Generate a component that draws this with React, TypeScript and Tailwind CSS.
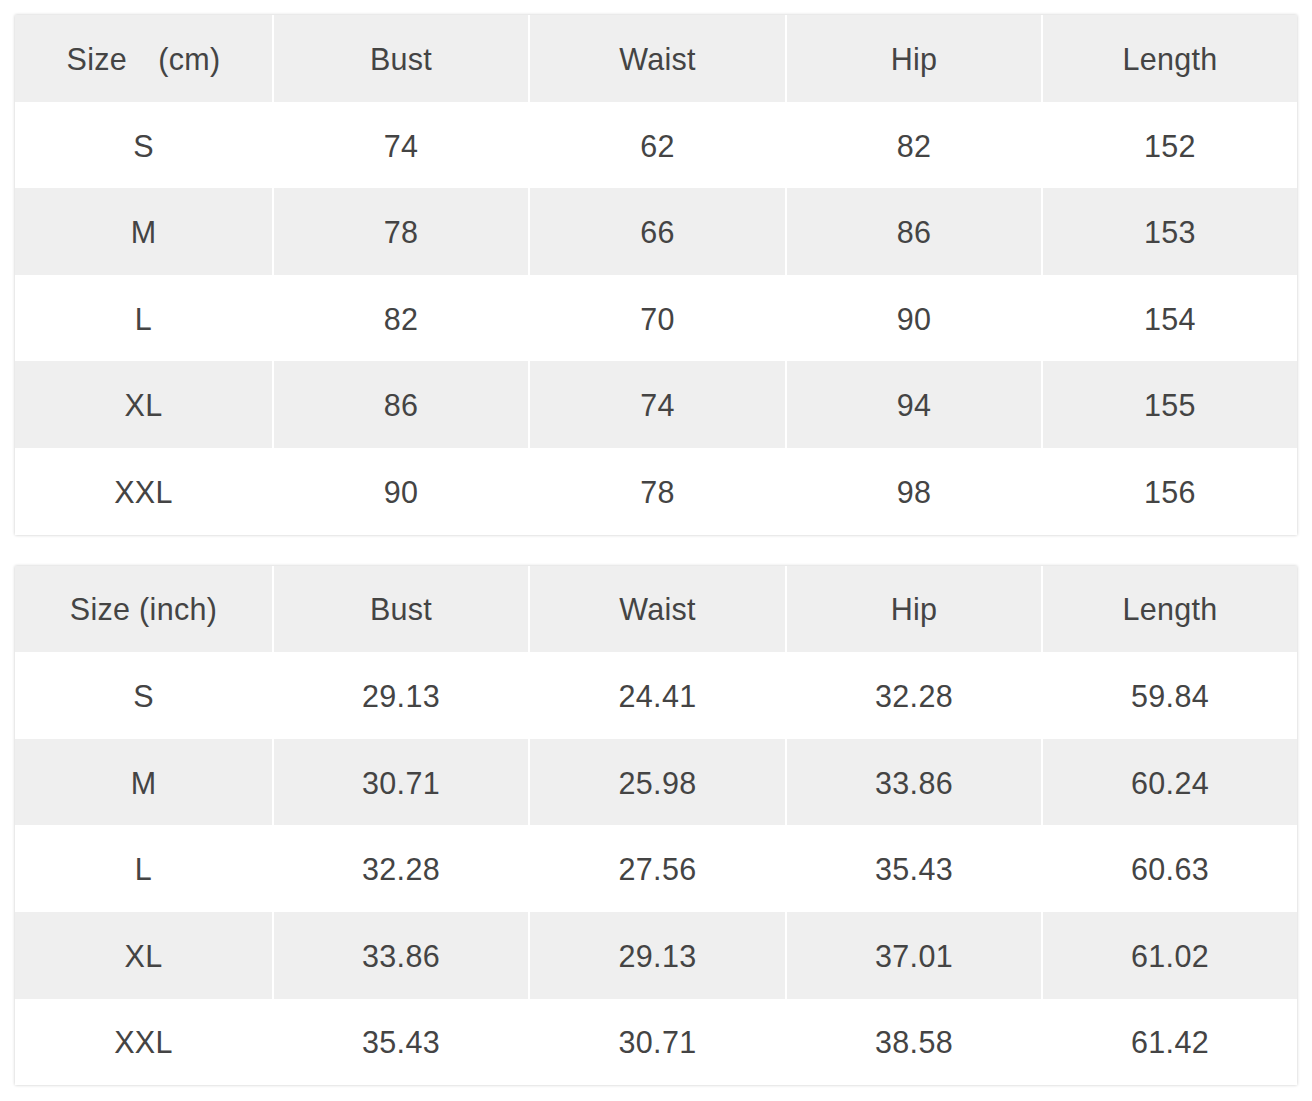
import React from "react";

const cm = [
  ["S", "74", "62", "82", "152"],
  ["M", "78", "66", "86", "153"],
  ["L", "82", "70", "90", "154"],
  ["XL", "86", "74", "94", "155"],
  ["XXL", "90", "78", "98", "156"],
];
const inch = [
  ["S", "29.13", "24.41", "32.28", "59.84"],
  ["M", "30.71", "25.98", "33.86", "60.24"],
  ["L", "32.28", "27.56", "35.43", "60.63"],
  ["XL", "33.86", "29.13", "37.01", "61.02"],
  ["XXL", "35.43", "30.71", "38.58", "61.42"],
];

function Table({ head, rows }: { head: string[]; rows: string[][] }) {
  const all = [head, ...rows];
  return (
    <div className="w-[1282px] shadow-[0_0_3px_rgba(0,0,0,0.22)] bg-white">
      {all.map((r, i) => (
        <div
          key={i}
          className="grid grid-cols-[257px_254px_255px_254px_254px] gap-x-[2px] h-[86.6px] bg-white"
        >
          {r.map((c, j) => (
            <div
              key={j}
              className={`flex items-center justify-center pt-[3px] whitespace-pre text-[30.5px] tracking-[0.3px] text-[#444] ${
                i % 2 === 0 ? "bg-[#efefef]" : "bg-white"
              }`}
            >
              {c}
            </div>
          ))}
        </div>
      ))}
    </div>
  );
}

export default function App() {
  const cols = ["Bust", "Waist", "Hip", "Length"];
  return (
    <div
      className="w-[1312px] h-[1101px] bg-white pt-[15px] pl-[15px] flex flex-col gap-[31px]"
      style={{ fontFamily: '"Liberation Sans", Arial, sans-serif' }}
    >
      <Table head={["Size　(cm)", ...cols]} rows={cm} />
      <Table head={["Size (inch)", ...cols]} rows={inch} />
    </div>
  );
}
